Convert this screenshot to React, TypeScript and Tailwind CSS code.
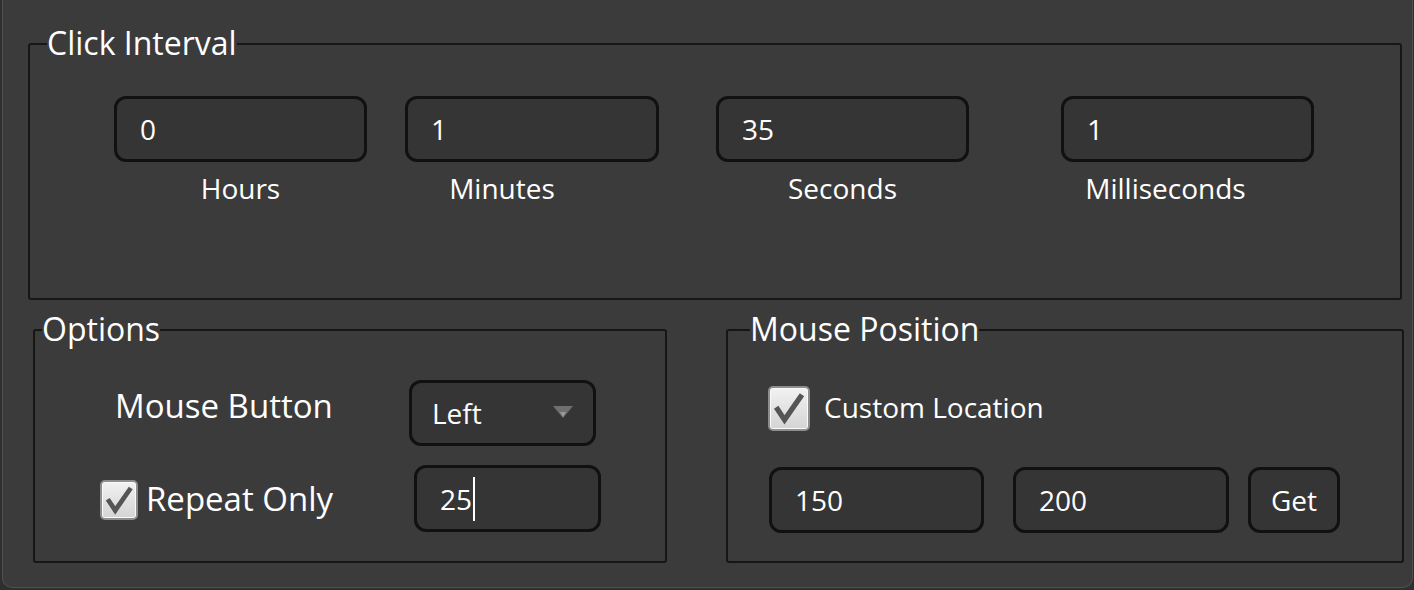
import React from "react";

const font = { fontFamily: '"Open Sans", "Noto Sans", sans-serif' };

const Group: React.FC<{ title: string; titleLeft: string; className: string; children: React.ReactNode }> = ({
    title,
    titleLeft,
    className,
    children,
}) => {
    return (
        <div className={`relative border-2 border-[#161616] rounded-[3px] ${className}`}>
            <span className={`absolute top-[-22px] ${titleLeft} bg-[#3b3b3b] text-[32px] leading-[40px] text-white`}>
                {title}
            </span>
            {children}
        </div>
    );
};

const TextBox: React.FC<{ value: string; className?: string; caret?: boolean }> = ({ value, className = "", caret }) => {
    return (
        <div
            className={`flex items-center h-[66px] px-[23px] border-[3px] border-[#111111] rounded-[12px] bg-[#353535] text-[28px] text-white ${className}`}
        >
            <span className="leading-[38px]">{value}</span>
            {caret && <span className="ml-[1px] w-[2px] h-[44px] bg-white" />}
        </div>
    );
};

const CheckBox: React.FC<{ size: string }> = ({ size }) => {
    return (
        <div
            className={`flex items-center justify-center ${size} rounded-[5px] border-2 border-[#8e8e8e] bg-gradient-to-b from-[#f2f2f2] to-[#d4d4d4] shadow-[inset_0_0_0_1px_#fafafa]`}
        >
            <svg viewBox="0 0 24 24" className="w-[88%] h-[88%]">
                <path d="M3 11.5 L9 20.5 L21.5 2.5" fill="none" stroke="#555555" strokeWidth="3.8" strokeLinejoin="miter" />
            </svg>
        </div>
    );
};

const App: React.FC = () => {
    return (
        <div className="w-[1414px] h-[590px] bg-[#2f2f2f]" style={font}>
            <div className="ml-[2px] w-[1411px] h-[588px] bg-[#3b3b3b] border-x border-b border-[#4f4f4f] rounded-b-[10px] pt-[43px]">
                <Group title="Click Interval" titleLeft="left-[17px]" className="ml-[25px] w-[1374px] h-[257px]">
                    <div className="flex pt-[51px] pl-[84px]">
                        <div className="flex flex-col w-[253px]">
                            <TextBox value="0" />
                            <span className="mt-[8px] text-center text-[28px] leading-[36px] text-white">Hours</span>
                        </div>
                        <div className="flex flex-col w-[254px] ml-[38px]">
                            <TextBox value="1" />
                            <span className="mt-[8px] pr-[60px] text-center text-[28px] leading-[36px] text-white">Minutes</span>
                        </div>
                        <div className="flex flex-col w-[253px] ml-[57px]">
                            <TextBox value="35" />
                            <span className="mt-[8px] text-center text-[28px] leading-[36px] text-white">Seconds</span>
                        </div>
                        <div className="flex flex-col w-[253px] ml-[92px]">
                            <TextBox value="1" />
                            <span className="mt-[8px] pr-[44px] text-center text-[28px] leading-[36px] text-white">Milliseconds</span>
                        </div>
                    </div>
                </Group>

                <div className="flex mt-[29px]">
                    <Group title="Options" titleLeft="left-[7px]" className="ml-[30px] w-[634px] h-[234px]">
                        <div className="grid grid-cols-[374px_auto] gap-y-[19px] pt-[49px]">
                            <div className="flex items-center pl-[80px] pb-[14px]">
                                <span className="text-[33px] leading-[40px] text-white">Mouse Button</span>
                            </div>
                            <div className="flex items-center justify-between w-[187px] h-[66px] pl-[20px] pr-[20px] border-[3px] border-[#111111] rounded-[12px] bg-[#353535]">
                                <span className="text-[28px] leading-[38px] text-white">Left</span>
                                <svg viewBox="0 0 20 12" className="w-[20px] h-[12px] mb-[2px]">
                                    <path d="M0 0 H20 L10 12 Z" fill="#6f6f6f" />
                                    <path d="M7 6 H13 L10 11 Z" fill="#9a9a9a" />
                                </svg>
                            </div>
                            <div className="flex items-center pl-[65px] pt-[3px]">
                                <CheckBox size="w-[38px] h-[40px]" />
                                <span className="ml-[8px] mb-[2px] text-[33px] leading-[40px] text-white">Repeat Only</span>
                            </div>
                            <TextBox value="25" caret className="ml-[5px] w-[187px] h-[67px] px-[19px]" />
                        </div>
                    </Group>

                    <Group title="Mouse Position" titleLeft="left-[22px]" className="ml-[59px] w-[678px] h-[234px]">
                        <div className="flex items-center pt-[55px] pl-[40px]">
                            <CheckBox size="w-[42px] h-[45px]" />
                            <span className="ml-[14px] mb-[4px] text-[28px] leading-[38px] text-white">Custom Location</span>
                        </div>
                        <div className="flex mt-[36px] pl-[41px]">
                            <TextBox value="150" className="w-[215px]" />
                            <TextBox value="200" className="ml-[29px] w-[216px]" />
                            <div className="ml-[19px] flex items-center justify-center w-[92px] h-[66px] border-[3px] border-[#111111] rounded-[12px] bg-[#353535] text-[28px] leading-[38px] text-white">
                                Get
                            </div>
                        </div>
                    </Group>
                </div>
            </div>
        </div>
    );
};

export default App;
